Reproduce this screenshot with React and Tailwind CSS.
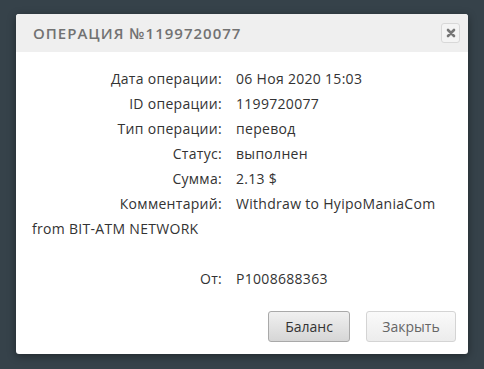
export default function App() {
  const rows = [
    ['Дата операции:', '06 Ноя 2020 15:03'],
    ['ID операции:', '1199720077'],
    ['Тип операции:', 'перевод'],
    ['Статус:', 'выполнен'],
    ['Сумма:', '2.13 $'],
  ];
  return (
    <div className="w-[484px] h-[369px] bg-[#36424a] pt-[14px] pl-[16px] overflow-hidden" style={{ fontFamily: '"Open Sans", sans-serif' }}>
      <div className="w-[452px] h-[340px] bg-white rounded-[3px] shadow-[0_2px_8px_rgba(0,0,0,0.4)] flex flex-col overflow-hidden">
        <div className="h-[38px] bg-[#efefef] flex items-center justify-between pl-[17px] pr-[8px]">
          <span className="text-[15px] font-semibold tracking-[1px] text-[#727272]">ОПЕРАЦИЯ №1199720077</span>
          <button className="w-[19px] h-[20px] border border-[#d8d8d8] rounded-[3px] bg-[#f4f4f4] flex items-center justify-center">
            <svg width="10" height="10" viewBox="0 0 10 10">
              <path d="M2 2 L8 8 M8 2 L2 8" stroke="#777" strokeWidth="2.6" strokeLinecap="round" />
            </svg>
          </button>
        </div>
        <div className="px-[16px] pt-[14px] text-[14px] tracking-[0.3px] text-[#333] leading-[25px]">
          {rows.map(([l, v]) => (
            <div key={l} className="flex">
              <span className="w-[190px] text-right shrink-0">{l}</span>
              <span className="pl-[14px]">{v}</span>
            </div>
          ))}
          <div>
            <span className="inline-block w-[190px] text-right">Комментарий:</span>
            <span className="pl-[14px]">Withdraw to HyipoManiaCom</span>
            <br />
            from BIT-ATM NETWORK
          </div>
          <div className="flex mt-[25px]">
            <span className="w-[190px] text-right shrink-0">От:</span>
            <span className="pl-[14px]">P1008688363</span>
          </div>
        </div>
        <div className="flex justify-end gap-[16px] pr-[12px] mt-auto mb-[12px]">
          <button className="w-[82px] h-[31px] rounded-[3px] border border-[#a9a9a9] bg-gradient-to-b from-[#f0f0f0] to-[#d6d6d6] text-[14px] text-[#333]">Баланс</button>
          <button className="w-[90px] h-[31px] rounded-[3px] border border-[#d4d4d4] bg-gradient-to-b from-[#fafafa] to-[#ececec] text-[14px] text-[#666]">Закрыть</button>
        </div>
      </div>
    </div>
  );
}
